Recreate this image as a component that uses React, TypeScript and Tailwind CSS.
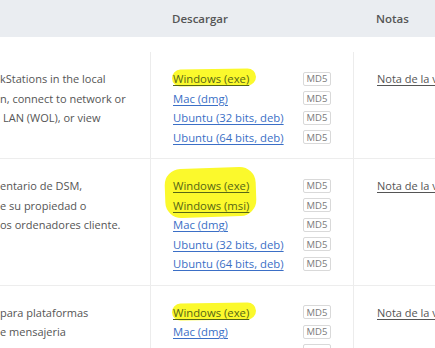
import React from 'react';

type Link = { label: string; marked?: boolean };

const rows: { desc: string[]; links: Link[]; group?: boolean }[] = [
  {
    desc: ['kStations in the local', 'n, connect to network or', ' LAN (WOL), or view'],
    links: [
      { label: 'Windows (exe)', marked: true },
      { label: 'Mac (dmg)' },
      { label: 'Ubuntu (32 bits, deb)' },
      { label: 'Ubuntu (64 bits, deb)' },
    ],
  },
  {
    desc: ['entario de DSM,', 'e su propiedad o', 'os ordenadores cliente.'],
    group: true,
    links: [
      { label: 'Windows (exe)', marked: true },
      { label: 'Windows (msi)', marked: true },
      { label: 'Mac (dmg)' },
      { label: 'Ubuntu (32 bits, deb)' },
      { label: 'Ubuntu (64 bits, deb)' },
    ],
  },
  {
    desc: ['para plataformas', 'e mensajeria'],
    links: [
      { label: 'Windows (exe)', marked: true },
      { label: 'Mac (dmg)' },
      { label: 'Fedora (32 bits, rpm)' },
      { label: 'Fedora (64 bits, rpm)' },
    ],
  },
];

function Md5() {
  return (
    <span className="inline-flex h-[14px] w-[28px] items-center justify-center rounded-[2px] border border-[#d9d9d9] text-[9.5px] leading-none text-[#7a7a7a]">
      MD5
    </span>
  );
}

function LinkLine({ link, single }: { link: Link; single: boolean }) {
  return (
    <div className="flex h-[19.5px] items-center">
      <span className="relative w-[130px] whitespace-nowrap text-[11.3px]">
        {link.marked && single && (
          <span className="absolute -left-[1px] top-[0px] h-[17px] w-[84px] -rotate-1 rounded-[9px] bg-[#fbf92c]" />
        )}
        <a
          className={`relative underline underline-offset-2 ${
            link.marked ? 'text-[#566616] decoration-[#566616]' : 'text-[#3b6fc6] decoration-[#3b6fc6]'
          }`}
        >
          {link.label}
        </a>
      </span>
      <Md5 />
    </div>
  );
}

export default function App() {
  return (
    <div
      className="h-[348px] w-[435px] overflow-hidden bg-white text-[11px] text-[#555]"
      style={{ fontFamily: '"Open Sans", "Noto Sans", Arial, sans-serif' }}
    >
      {/* header */}
      <div className="grid h-[37px] grid-cols-[151px_203px_1fr] items-center bg-[#eaedf1] text-[11.5px] font-semibold text-[#555]">
        <div />
        <div className="pl-[21px]">Descargar</div>
        <div className="pl-[22px]">Notas</div>
      </div>

      <div className="mt-[15px]">
        {rows.map((row, i) => (
          <div key={i} className="grid grid-cols-[151px_203px_1fr] border-b border-[#ededed] leading-[19.5px]">
            <div className="overflow-hidden border-r border-[#ececec] pt-[17px] pb-[11px]">
              {row.desc.map((d, j) => (
                <div key={j} className={`whitespace-nowrap ${d.startsWith(' ') ? 'pl-[3px]' : ''}`}>
                  {d.trim()}
                </div>
              ))}
            </div>
            <div className="border-r border-[#ececec] pt-[17px] pb-[11px] pl-[22px]">
              {row.group ? (
                <>
                  <div className="relative">
                    <span className="absolute -left-[8px] -top-[8px] h-[49px] w-[91px] -rotate-2 rounded-[16px] bg-[#fbf92c]" />
                    <LinkLine link={row.links[0]} single={false} />
                    <LinkLine link={row.links[1]} single={false} />
                  </div>
                  {row.links.slice(2).map((l, j) => (
                    <LinkLine key={j} link={l} single />
                  ))}
                </>
              ) : (
                row.links.map((l, j) => <LinkLine key={j} link={l} single />)
              )}
            </div>
            <div className="whitespace-nowrap pt-[17px] pl-[23px]">
              <a className="underline underline-offset-2">Nota de la versión</a>
            </div>
          </div>
        ))}
      </div>
    </div>
  );
}
